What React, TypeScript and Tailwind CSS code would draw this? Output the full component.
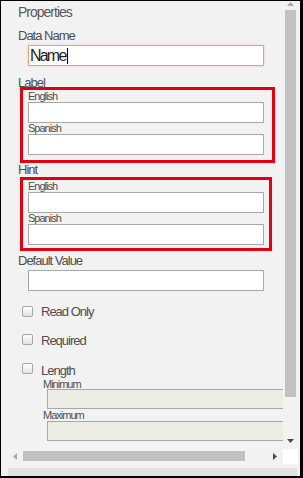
import React from 'react';

function TextInput({ className = '' }: { className?: string }) {
  return <div className={`h-[21px] w-[236px] border border-[#a9a9a9] bg-white ${className}`} />;
}

function Checkbox({ label, offset }: { label: string; offset: string }) {
  return (
    <div className="flex items-start">
      <div className={`ml-[4px] w-[11px] h-[11px] rounded-[2px] border border-[#a5a5a5] bg-gradient-to-b from-white to-[#e2e2e2] ${offset}`} />
      <span className="ml-[8px] text-[13px] tracking-[-1px]">{label}</span>
    </div>
  );
}

export default function App() {
  return (
    <div className="w-[303px] h-[478px] border-black border-t border-l border-r-[3px] border-b-2 bg-[#f2f2f2] flex flex-col font-['Liberation_Sans',Arial,sans-serif] text-[#4f4f4f]">
      <div className="h-[450px] flex">
        {/* panel content */}
        <div className="w-[282px] overflow-hidden pl-[17px] pt-[3px]">
          <div className="text-[14px] leading-[16px] tracking-[-1px] text-[#5a5a5a]">Properties</div>
          <div className="mt-[8px] text-[13px] leading-[16px] tracking-[-1px]">Data Name</div>
          <div className="mt-[1px] ml-[10px] h-[21px] w-[236px] border border-[#e6a486] shadow-[0_0_2px_#f3c6b0] bg-white flex items-center pl-[1px]">
            <span className="text-[16px] leading-[19px] tracking-[-1.8px] text-[#222]">Name</span>
            <span className="ml-[2px] w-[1px] h-[16px] bg-black" />
          </div>

          <div className="mt-[11px] text-[13px] leading-[11px] tracking-[-1px]">Label</div>
          <div className="-mt-[1px] ml-[2px] w-[255px] border-[3px] border-[#e3000f] pl-[5px] pb-[5px]">
            <div className="text-[11px] leading-[12px] tracking-[-1px]">English</div>
            <TextInput />
            <div className="text-[11px] leading-[11px] tracking-[-1px]">Spanish</div>
            <TextInput />
          </div>

          <div className="text-[13px] leading-[14px] tracking-[-1px]">Hint</div>
          <div className="ml-[2px] w-[252px] border-[3px] border-[#e3000f] pl-[5px] pb-[3px]">
            <div className="text-[11px] leading-[12px] tracking-[-1px]">English</div>
            <TextInput />
            <div className="text-[11px] leading-[11px] tracking-[-1px]">Spanish</div>
            <TextInput />
          </div>

          <div className="mt-[2px] text-[13px] leading-[16px] tracking-[-1px]">Default Value</div>
          <TextInput className="mt-[1px] ml-[10px]" />

          <div className="mt-[13px] h-[16px] leading-[16px]">
            <Checkbox label="Read Only" offset="mt-[2px]" />
          </div>
          <div className="mt-[13px] h-[16px] leading-[16px]">
            <Checkbox label="Required" offset="mt-[1px]" />
          </div>
          <div className="mt-[16px] h-[12px] leading-[11px]">
            <Checkbox label="Length" offset="-mt-[2px]" />
          </div>

          <div className="mt-[2px] ml-[25px] text-[11px] leading-[10px] tracking-[-1px]">Minimum</div>
          <div className="ml-[29px] h-[20px] w-[260px] border border-[#a8a8a8] bg-[#ecebe4]" />
          <div className="ml-[25px] text-[11px] leading-[12px] tracking-[-1px]">Maximum</div>
          <div className="ml-[29px] h-[20px] w-[260px] border border-[#a8a8a8] bg-[#ecebe4]" />
        </div>

        {/* vertical scrollbar */}
        <div className="ml-[2px] w-[11px] flex flex-col">
          <div className="h-[9px] flex justify-center pt-[1px]">
            <svg width="7" height="4" viewBox="0 0 7 4">
              <path d="M0 4 L3.5 0 L7 4 Z" fill="#a8a8a8" />
            </svg>
          </div>
          <div className="h-[387px] bg-[#c1c1c1]" />
          <div className="mt-[42px] flex justify-center">
            <svg width="7" height="4" viewBox="0 0 7 4">
              <path d="M0 0 L7 0 L3.5 4 Z" fill="#4a4a4a" />
            </svg>
          </div>
        </div>
      </div>

      {/* horizontal scrollbar */}
      <div className="h-[11px] flex items-center">
        <svg className="ml-[12px]" width="4" height="7" viewBox="0 0 4 7">
          <path d="M4 0 L4 7 L0 3.5 Z" fill="#a8a8a8" />
        </svg>
        <div className="ml-[6px] w-[222px] h-[10px] self-start bg-[#c1c1c1]" />
        <svg className="ml-[28px]" width="4" height="7" viewBox="0 0 4 7">
          <path d="M0 0 L4 3.5 L0 7 Z" fill="#4a4a4a" />
        </svg>
        <div className="ml-[6px] w-[15px] h-[15px] shrink-0 bg-white" />
      </div>

      <div className="mt-[6px] ml-[7px] w-[289px] h-[8px] bg-[#e1e1e1]" />
    </div>
  );
}
